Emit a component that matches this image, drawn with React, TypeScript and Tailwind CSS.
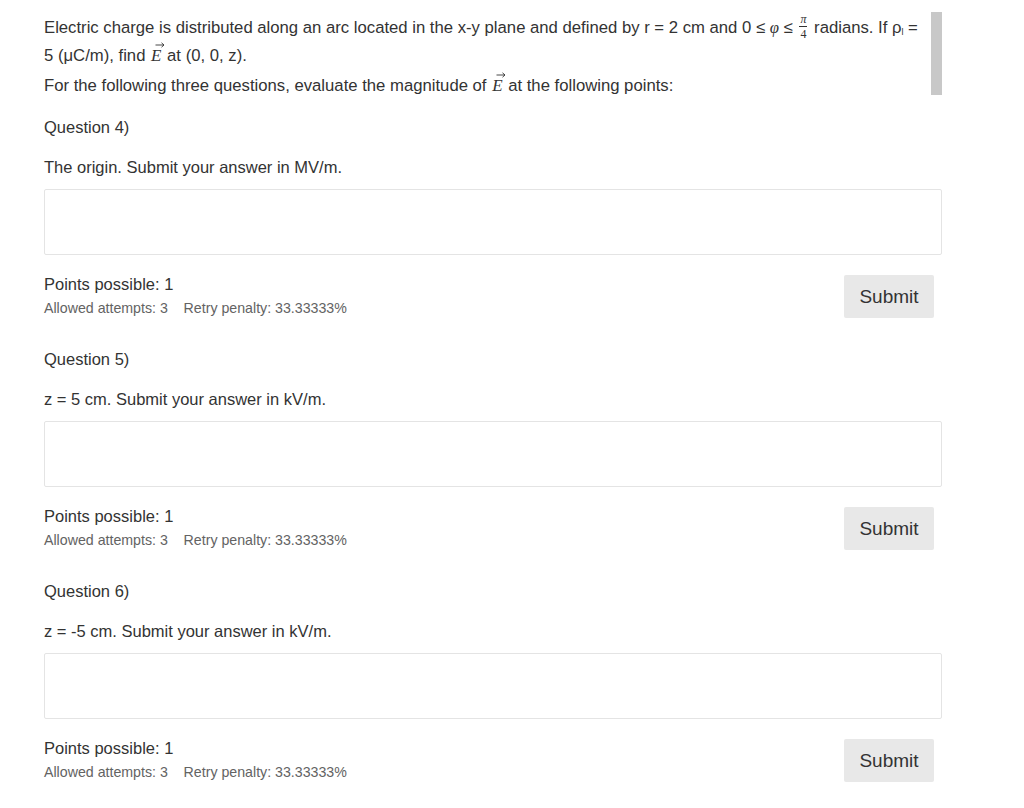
import React from "react";

const VecE = () => (
  <span className="relative inline-block px-[1px]" style={{ fontFamily: '"Liberation Serif", serif' }}>
    <span className="italic text-[17px]">E</span>
    <svg className="absolute left-[5px] top-[0px]" width="10" height="6" viewBox="0 0 10 6">
      <path d="M0.5 3H9M6.5 0.8L9 3L6.5 5.2" stroke="#333" strokeWidth="0.9" fill="none" />
    </svg>
  </span>
);

const PiOver4 = () => (
  <span
    className="inline-flex flex-col items-center align-middle leading-none text-[12px] mx-[2px] -mt-[4px]"
    style={{ fontFamily: '"Liberation Serif", serif' }}
  >
    <span className="italic border-b border-[#333] px-[1px] pb-[1px]">π</span>
    <span className="pt-[1px]">4</span>
  </span>
);

const Question = ({ num, text }: { num: number; text: string }) => (
  <div className="mt-[15px]">
    <div className="leading-[24px] text-[16.5px]">Question {num})</div>
    <div className="mt-[16px] leading-[24px] text-[16.5px]">{text}</div>
    <input
      type="text"
      className="mt-[10px] block w-full h-[66px] border border-[#e4e4e4] rounded-[2px] bg-white outline-none"
    />
    <div className="mt-[17px] flex justify-between items-start">
      <div>
        <div className="leading-[24px] text-[16.5px]">Points possible: 1</div>
        <div className="mt-[2px] leading-[20px] text-[14.2px] text-[#636363]">
          Allowed attempts: 3&nbsp;&nbsp;&nbsp;&nbsp;Retry penalty: 33.33333%
        </div>
      </div>
      <button className="mt-[3px] mr-[8px] w-[90px] h-[43px] rounded-[2px] bg-[#e8e8e8] text-[19px] text-[#333] pt-[1px]">
        Submit
      </button>
    </div>
    <div className="h-[14px]" />
  </div>
);

export default function App() {
  return (
    <div
      className="min-h-[808px] bg-white text-[#333]"
      style={{ fontFamily: '"Liberation Sans", Arial, sans-serif' }}
    >
      <div className="ml-[44px] w-[898px] pt-[14px]">
        <div className="flex items-start">
          <div className="flex-1 text-[16.7px]">
            <p className="leading-[28px]">
              Electric charge is distributed along an arc located in the x-y plane and defined by r = 2 cm and 0 ≤{" "}
              <span className="italic" style={{ fontFamily: '"Liberation Serif", serif' }}>φ</span> ≤ <PiOver4 /> radians. If ρ
              <sub className="text-[9px]">l</sub> = 5 (μC/m), find <VecE /> at (0, 0, z).
            </p>
            <p className="mt-[2px] leading-[28px]">
              For the following three questions, evaluate the magnitude of <VecE /> at the following points:
            </p>
          </div>
          <div className="-mt-[2px] w-[11px] h-[83px] bg-[#c8c8c8]" />
        </div>
        <Question num={4} text="The origin. Submit your answer in MV/m." />
        <Question num={5} text="z = 5 cm. Submit your answer in kV/m." />
        <Question num={6} text="z = -5 cm. Submit your answer in kV/m." />
      </div>
    </div>
  );
}
